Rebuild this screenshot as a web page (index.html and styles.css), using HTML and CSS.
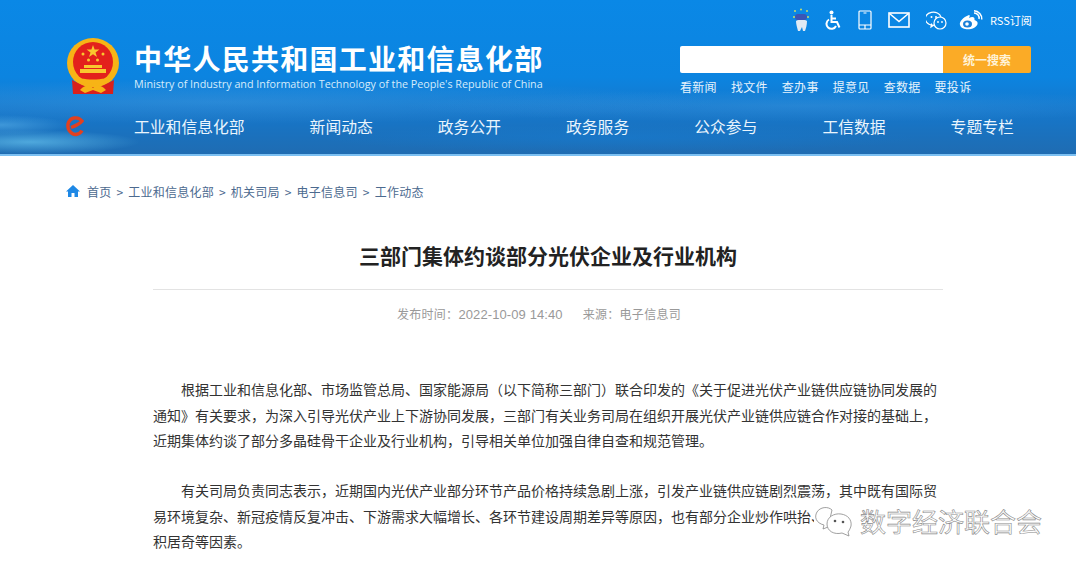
FILE: index.html
```html
<!DOCTYPE html>
<html lang="zh-CN">
<head>
  <meta charset="UTF-8">
  <title>三部门集体约谈部分光伏企业及行业机构</title>
  <link rel="stylesheet" href="styles.css">
</head>
<body>

  <header class="site-header">
    <div class="header-top">
      <div class="brand">
        <svg class="emblem" viewBox="0 0 54 58" width="54" height="58">
          <ellipse cx="27" cy="25" rx="26" ry="25" fill="#f7b416"/>
          <ellipse cx="27" cy="24" rx="20" ry="20" fill="#e3211c"/>
          <polygon points="27,7 28.6,11.6 33.4,11.6 29.5,14.5 31,19 27,16.2 23,19 24.5,14.5 20.6,11.6 25.4,11.6" fill="#f9c82e"/>
          <circle cx="17" cy="16" r="1.5" fill="#f9c82e"/>
          <circle cx="37" cy="16" r="1.5" fill="#f9c82e"/>
          <circle cx="22.5" cy="22" r="1.5" fill="#f9c82e"/>
          <circle cx="31.5" cy="22" r="1.5" fill="#f9c82e"/>
          <rect x="18" y="27" width="18" height="3" fill="#f9c82e"/>
          <rect x="14" y="31" width="26" height="4" fill="#f9c82e"/>
          <path d="M6 37 C14 43 40 43 48 37 L46 42 C38 47 16 47 8 42 Z" fill="#f7b416"/>
          <path d="M6 42 L16 47 C22 50 32 50 38 47 L48 42 L47 56 L7 56 Z" fill="#d9201c"/>
          <path d="M14 52 C20 46 24 47 27 50 C30 47 34 46 40 52 L35 55 L27 52 L19 55 Z" fill="#f7b416"/>
        </svg>
        <div class="brand-text">
          <div class="brand-name">中华人民共和国工业和信息化部</div>
          <div class="brand-en">Ministry of Industry and Information Technology of the People's Republic of China</div>
        </div>
      </div>

      <div class="tools">
        <div class="tool-icons">
          <svg width="16" height="24" viewBox="0 0 16 24">
            <path d="M3 13 C6 11 11 11 14 13 C14 17 13 20 12 23 L10 23 L9 19 L7 23 L5 23 C4 19 3 16 3 13 Z" fill="#dfeaf4"/>
            <rect x="2" y="6" width="12" height="6" rx="3" fill="#3b55b5"/>
            <circle cx="2" cy="3" r="1" fill="#c9dc6a"/>
            <circle cx="8" cy="1.500" r="1" fill="#c9dc6a"/>
            <circle cx="14" cy="3" r="1" fill="#c9dc6a"/>
            <circle cx="1" cy="9" r="1" fill="#c9dc6a"/>
            <circle cx="15" cy="9" r="1" fill="#c9dc6a"/>
          </svg>
          <svg width="17" height="20" viewBox="0 0 17 20" fill="none" stroke="#fff" stroke-width="2">
            <circle cx="6.500" cy="2.500" r="2" fill="#fff" stroke="none"/>
            <path d="M6.500 5 V12 H12 L14.500 17.500"/>
            <path d="M6.500 8.500 H11"/>
            <path d="M4 9.500 A5 5 0 1 0 11 16"/>
          </svg>
          <svg width="14" height="20" viewBox="0 0 14 20" fill="none" stroke="#fff" stroke-width="1.200">
            <rect x="1" y="1" width="12" height="18" rx="1"/>
            <path d="M1 15 H13 M7 15 V19 M5.500 3 H8.500"/>
          </svg>
          <svg width="22" height="16" viewBox="0 0 22 16" fill="none" stroke="#fff" stroke-width="1.600">
            <rect x="1" y="1" width="20" height="14"/>
            <path d="M1.500 1.500 L11 9.500 L20.500 1.500"/>
          </svg>
          <svg width="21" height="19" viewBox="0 0 21 19" fill="none" stroke="#fff" stroke-width="1.200">
            <path d="M9 14 A8 6.500 0 1 1 15 6 M8 14 L5 16 L5.500 12.500"/>
            <circle cx="14" cy="12" r="6"/>
            <circle cx="5.500" cy="6" r="1" fill="#fff" stroke="none"/>
            <circle cx="10" cy="6" r="1" fill="#fff" stroke="none"/>
            <circle cx="12" cy="11" r="0.900" fill="#fff" stroke="none"/>
            <circle cx="16" cy="11" r="0.900" fill="#fff" stroke="none"/>
          </svg>
          <svg class="icon-weibo" width="24" height="20" viewBox="0 0 24 20" fill="none">
            <path d="M10 5 C4 7 0 12 1 15 C2 19 8 20 12 19 C17 18 20 14 18 11.500 C17 10.500 16 10.500 15.500 10 C16 7.500 14 6 10 8 C11 6 11 5 10 5 Z" fill="#fff"/>
            <ellipse cx="8.500" cy="14" rx="4.500" ry="3.500" fill="#1b80d8"/>
            <circle cx="8" cy="14" r="1.800" fill="#fff"/>
            <path d="M15 3 A5 5 0 0 1 20 9 M15 0.800 A8 8 0 0 1 22.800 9.500" stroke="#fff" stroke-width="1.500"/>
          </svg>
          <span class="rss">RSS订阅</span>
        </div>
        <div class="search">
          <div class="search-input"></div>
          <div class="search-btn">统一搜索</div>
        </div>
        <div class="quick-links">
          <span>看新闻</span>
          <span>找文件</span>
          <span>查办事</span>
          <span>提意见</span>
          <span>查数据</span>
          <span>要投诉</span>
        </div>
      </div>
    </div>

    <nav class="main-nav">
      <svg class="nav-logo" width="20" height="22" viewBox="0 0 20 22" fill="none" stroke="#e2401f" stroke-width="3.400">
        <path d="M6 12.500 C10 11 15 9 17 6 C13 1 5 2 3 9 C2 15 7 20 11 19.500 C14 19 16 17.500 17 15.500"/>
      </svg>
      <a>工业和信息化部</a>
      <a>新闻动态</a>
      <a>政务公开</a>
      <a>政务服务</a>
      <a>公众参与</a>
      <a>工信数据</a>
      <a>专题专栏</a>
    </nav>
  </header>

  <div class="breadcrumb">
    <svg width="14" height="12" viewBox="0 0 14 12"><path d="M7 0 L14 6.500 H12 V12 H8.500 V8 H5.500 V12 H2 V6.500 H0 Z" fill="#1e88e5"/></svg>
    <span>首页 &gt; 工业和信息化部 &gt; 机关司局 &gt; 电子信息司 &gt; 工作动态</span>
  </div>

  <main class="article">
    <h1>三部门集体约谈部分光伏企业及行业机构</h1>
    <div class="meta">
      <span>发布时间：<span class="time">2022-10-09 14:40</span></span>
      <span>来源：电子信息司</span>
    </div>
    <p>根据工业和信息化部、市场监管总局、国家能源局（以下简称三部门）联合印发的《关于促进光伏产业链供应链协同发展的通知》有关要求，为深入引导光伏产业上下游协同发展，三部门有关业务司局在组织开展光伏产业链供应链合作对接的基础上，近期集体约谈了部分多晶硅骨干企业及行业机构，引导相关单位加强自律自查和规范管理。</p>
    <p>有关司局负责同志表示，近期国内光伏产业部分环节产品价格持续急剧上涨，引发产业链供应链剧烈震荡，其中既有国际贸易环境复杂、新冠疫情反复冲击、下游需求大幅增长、各环节建设周期差异等原因，也有部分企业炒作哄抬、惜售捂盘、跟风囤积居奇等因素。</p>
  </main>

  <div class="watermark">
    <svg width="42" height="32" viewBox="0 0 42 32" fill="#fff" stroke="#888" stroke-width="0.800">
      <path d="M10 20 C2 18 0 12 3 7 C6 2 14 1 18 5 L14 22 L9 24 Z"/>
      <path d="M28 28 C20 30 13 26 13 19 C13 12 20 8 27 9 C34 10 38 15 37 21 C36 24 35 26 34 27 L35 31 Z"/>
      <circle cx="21" cy="16" r="1.300" fill="#555" stroke="none"/>
      <circle cx="29" cy="17" r="1.300" fill="#555" stroke="none"/>
    </svg>
    <span>数字经济联合会</span>
  </div>

</body>
</html>
```

FILE: styles.css
```css
* {
  box-sizing: border-box;
}
body {
  margin: 0;
  background: #fff;
  color: #333;
  font-family: "Microsoft YaHei", "Noto Sans CJK SC", "Noto Sans", sans-serif;
  overflow: hidden;
}

/* header */
.site-header {
  height: 156px;
  padding: 8px 45px 0 66px;
  color: #fff;
  border-bottom: 2px solid #7cc0f2;
  background:
    radial-gradient(ellipse 110px 12px at 30px 142px, rgba(120, 215, 250, 0.55), transparent),
    radial-gradient(ellipse 70px 10px at 0 125px, rgba(120, 205, 250, 0.4), transparent),
    radial-gradient(ellipse 500px 22px at 220px 102px, rgba(120, 190, 240, 0.22), transparent),
    radial-gradient(ellipse 400px 16px at 800px 106px, rgba(120, 190, 240, 0.18), transparent),
    radial-gradient(ellipse 300px 14px at 620px 138px, rgba(20, 130, 220, 0.35), transparent),
    linear-gradient(180deg, #0a88e6 0, #0c84e0 50%, #1577cb 72%, #1f6cb2 100%);
}
.header-top {
  display: flex;
  justify-content: space-between;
}
.brand {
  display: flex;
  align-items: flex-start;
  padding-top: 30px;
}
.emblem {
  flex: none;
}
.brand-text {
  margin-left: 14px;
  padding-top: 3px;
}
.brand-name {
  font-size: 28px;
  font-weight: 700;
  line-height: 34px;
  letter-spacing: 1.25px;
  white-space: nowrap;
}
.brand-en {
  font-family: "Open Sans", sans-serif;
  font-size: 10.75px;
  line-height: 16px;
  margin-top: 1px;
  white-space: nowrap;
  color: #d6ecfb;
}
.tools {
  width: 351px;
}
.tool-icons {
  display: flex;
  align-items: center;
  height: 24px;
  padding-left: 113px;
  gap: 16px;
}
.tool-icons svg {
  flex: none;
}
.icon-weibo {
  margin-left: -4px;
}
.rss {
  flex: none;
  font-size: 11px;
  margin-left: -9px;
  white-space: nowrap;
}
.search {
  display: flex;
  height: 27px;
  margin-top: 14px;
}
.search-input {
  flex: 1;
  background: #fff;
  border-radius: 2px 0 0 2px;
}
.search-btn {
  width: 88px;
  background: #fbab26;
  border-radius: 0 2px 2px 0;
  text-align: center;
  font-size: 12px;
  font-weight: 700;
  line-height: 27px;
  color: #fff3d8;
}
.quick-links {
  display: flex;
  gap: 14px;
  margin-top: 6px;
  font-size: 12px;
  line-height: 16px;
  letter-spacing: 0.3px;
  color: #e6f3fc;
}

.main-nav {
  display: flex;
  align-items: center;
  height: 30px;
  margin-top: 15px;
}
.nav-logo {
  flex: none;
  margin-left: -1px;
  margin-right: 49px;
}
.main-nav a {
  font-size: 15.8px;
  white-space: nowrap;
  color: #eaf5fd;
  margin-right: 65px;
}
.main-nav a:last-child {
  margin-right: 0;
}

/* breadcrumb */
.breadcrumb {
  display: flex;
  align-items: center;
  gap: 7px;
  height: 20px;
  margin: 25px 0 0 66px;
  font-size: 12px;
  letter-spacing: 0.25px;
  word-spacing: 2px;
  color: #4c6a8f;
}

/* article */
.article {
  width: 790px;
  margin: 0 0 0 153px;
}
.article h1 {
  margin: 0;
  padding: 36px 0 15px;
  height: 89px;
  border-bottom: 1px solid #e3e3e3;
  font-size: 21px;
  font-weight: 700;
  line-height: 36px;
  text-align: center;
  color: #222;
}
.meta {
  display: flex;
  justify-content: center;
  gap: 20px;
  height: 87px;
  padding: 15px 18px 0 0;
  font-size: 12px;
  letter-spacing: 0.3px;
  line-height: 18px;
  color: #999;
}
.time {
  font-family: "Liberation Sans", sans-serif;
  font-size: 13px;
  letter-spacing: 0.1px;
}
.article p {
  margin: 0 0 24.5px;
  font-size: 14px;
  line-height: 25.5px;
  text-indent: 28px;
  color: #333;
}

/* watermark over the text, blanks what lies under it */
.watermark {
  position: absolute;
  left: 814px;
  top: 504px;
  display: flex;
  align-items: center;
  gap: 4px;
  padding-right: 35px;
  background: #fff;
  font-size: 26px;
  line-height: 34px;
  white-space: nowrap;
  color: #fff;
  -webkit-text-stroke: 0.6px #8a8a8a;
}
```
